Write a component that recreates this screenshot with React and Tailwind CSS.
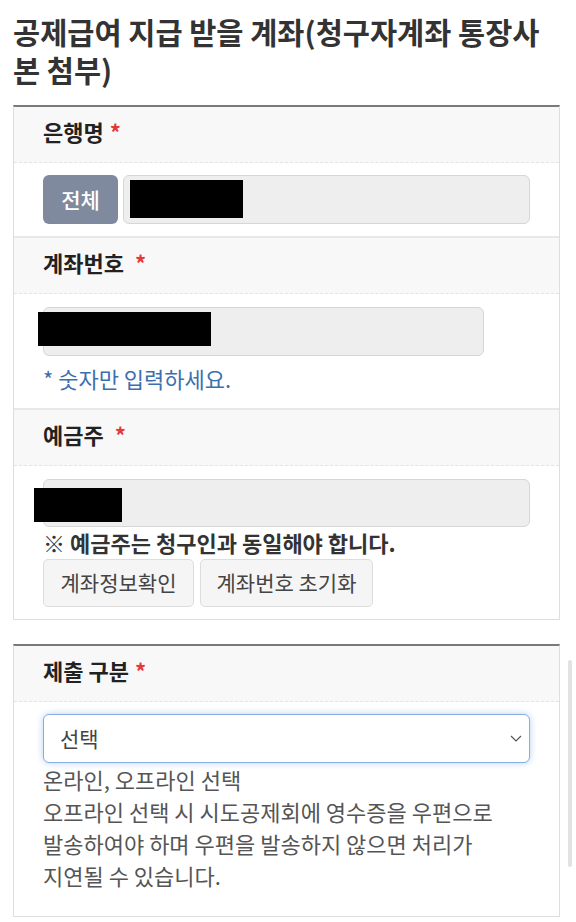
import React from "react";

const Req = () => <span className="ml-[6px] text-[#e53935]">*</span>;

const SectionHead = ({ children }) => (
  <div className="bg-[#f8f8f8] px-[29px] pt-[10px] pb-[17px] border-b border-dashed border-[#e4e4e4]">
    <h3 className="text-[22px] leading-[28px] font-bold text-[#222]">{children}</h3>
  </div>
);

const Redact = ({ className }) => (
  <div className={`absolute bg-black ${className}`} />
);

const App = () => {
  return (
    <div className="relative min-h-screen bg-white px-[13px] pt-[12px] pb-4 font-['Noto_Sans_CJK_KR','Noto_Sans',sans-serif]">
      <h2 className="text-[29.5px] leading-[38px] font-bold text-[#333]">
        공제급여 지급 받을 계좌(청구자계좌 통장사
        <br />본 첨부)
      </h2>

      {/* ------------ account card ---------------- */}

      <div className="mt-[17px] w-[547px] border border-[#dedede] border-t-2 border-t-[#7a7a7a]">
        {/* bank */}
        <SectionHead>
          은행명
          <Req />
        </SectionHead>
        <div className="px-[29px] pt-[12px] pb-[12px] flex gap-[5px]">
          <button className="w-[75px] h-[49px] rounded-[6px] bg-[#7f8a9e] text-white text-[21px] font-medium">
            전체
          </button>
          <div className="relative flex-1 h-[49px] rounded-[6px] bg-[#eeeeee] border border-[#d6d6d6]">
            <Redact className="left-[6px] top-[4px] w-[113px] h-[38px]" />
          </div>
        </div>

        {/* account number */}
        <div className="border-t-2 border-[#e8e8e8]">
          <SectionHead>
            계좌번호 <Req />
          </SectionHead>
          <div className="px-[29px] pt-[13px] pb-[16px]">
            <div className="relative w-[441px] h-[49px] rounded-[6px] bg-[#eeeeee] border border-[#d6d6d6]">
              <Redact className="-left-[6px] top-[4px] w-[173px] h-[34px]" />
            </div>
            <p className="mt-[8px] text-[22px] leading-[28px] text-[#3d6fae]">
              * 숫자만 입력하세요.
            </p>
          </div>
        </div>

        {/* holder */}
        <div className="border-t-2 border-[#e8e8e8]">
          <SectionHead>
            예금주 <Req />
          </SectionHead>
          <div className="px-[29px] pt-[13px] pb-[12px]">
            <div className="relative h-[48px] rounded-[6px] bg-[#eeeeee] border border-[#d6d6d6]">
              <Redact className="-left-[10px] top-[8px] w-[88px] h-[34px]" />
            </div>
            <p className="mt-[1px] text-[22px] leading-[28px] font-bold text-[#333]">
              ※ 예금주는 청구인과 동일해야 합니다.
            </p>
            <div className="mt-[3px] flex gap-[6px]">
              <button className="w-[151px] h-[48px] rounded-[5px] bg-[#f5f5f5] border border-[#dddddd] text-[21px] text-[#444]">
                계좌정보확인
              </button>
              <button className="w-[173px] h-[48px] rounded-[5px] bg-[#f5f5f5] border border-[#dddddd] text-[21px] text-[#444]">
                계좌번호 초기화
              </button>
            </div>
          </div>
        </div>
      </div>

      {/* ------------ submit type card ---------------- */}

      <div className="mt-[24px] w-[547px] border border-[#dedede] border-t-2 border-t-[#7a7a7a]">
        <SectionHead>
          제출 구분
          <Req />
        </SectionHead>
        <div className="px-[29px] pt-[12px] pb-[25px]">
          <div className="flex items-center justify-between h-[49px] pl-[16px] pr-[7px] rounded-[6px] bg-white border border-[#86ace0] shadow-[0_0_7px_rgba(102,155,225,0.45)]">
            <span className="text-[21px] text-[#444]">선택</span>
            <svg width="12" height="7" viewBox="0 0 12 7" fill="none">
              <polyline points="1,1 6,6 11,1" stroke="#555" strokeWidth="1.2" />
            </svg>
          </div>
          <p className="text-[22px] leading-[32px] text-[#555]">
            온라인, 오프라인 선택
            <br />
            오프라인 선택 시 시도공제회에 영수증을 우편으로
            <br />
            발송하여야 하며 우편을 발송하지 않으면 처리가
            <br />
            지연될 수 있습니다.
          </p>
        </div>
      </div>

      {/* scrollbar */}
      <div className="absolute right-[4px] top-[660px] w-[4px] h-[207px] rounded-full bg-[#e2e2e2]" />
    </div>
  );
};

export default App;
